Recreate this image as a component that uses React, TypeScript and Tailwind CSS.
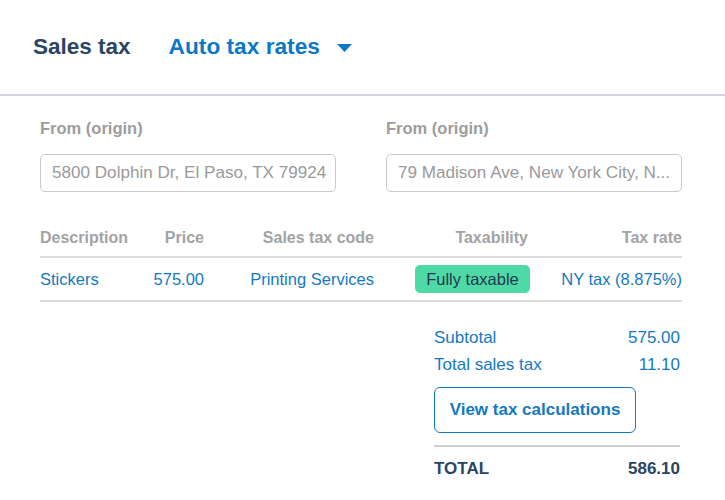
import React from "react";

const font = { fontFamily: '"Liberation Sans", Arial, Helvetica, sans-serif' };

function Caret() {
  return (
    <svg width="15" height="8" viewBox="0 0 15 8" className="ml-[17px] mt-[2px]">
      <polygon points="0,0 15,0 7.5,8" fill="#0b77c5" />
    </svg>
  );
}

function AddressField({ label, value }: { label: string; value: string }) {
  return (
    <div className="flex flex-col w-[296px]">
      <div className="h-[20px] leading-[20px] text-[16.5px] font-bold text-[#9d9d9d]">{label}</div>
      <div className="mt-[16px] h-[38px] rounded-[5px] border border-[#c9c9c9] pl-[11px] pr-[2px] flex items-center">
        <span className="text-[17.1px] text-[#9a9a9a] whitespace-nowrap">{value}</span>
      </div>
    </div>
  );
}

export default function App() {
  const cols = "grid grid-cols-[100px_64px_170px_156px_152px] items-center";
  return (
    <div className="w-[725px] h-[500px] bg-white overflow-hidden" style={font}>
      {/* Top bar */}
      <div className="h-[96px] border-b-2 border-[#d5d3dd] flex items-center pl-[33px] pb-[1px]">
        <span className="text-[22.5px] font-bold text-[#2a4562]">Sales tax</span>
        <span className="ml-[38px] text-[22.7px] font-bold text-[#0b77c5]">Auto tax rates</span>
        <Caret />
      </div>

      <div className="pl-[40px] pr-[43px]">
        {/* Origin addresses */}
        <div className="pt-[22px] flex gap-[50px]">
          <AddressField label="From (origin)" value="5800 Dolphin Dr, El Paso, TX 79924" />
          <AddressField label="From (origin)" value="79 Madison Ave, New York City, N..." />
        </div>

        {/* Line items */}
        <div className="mt-[28px]">
          <div className={`${cols} h-[38px] border-b-2 border-[#dcdcdc] text-[16px] font-bold text-[#a3a3a3]`}>
            <div>Description</div>
            <div className="text-right">Price</div>
            <div className="text-right">Sales tax code</div>
            <div className="text-right pr-[2px]">Taxability</div>
            <div className="text-right">Tax rate</div>
          </div>
          <div className={`${cols} h-[44px] border-b-2 border-[#dcdcdc] text-[16.5px] text-[#1479c1]`}>
            <div>Stickers</div>
            <div className="text-right">575.00</div>
            <div className="text-right">Printing Services</div>
            <div className="flex justify-end">
              <span className="h-[28px] w-[115px] rounded-[5px] bg-[#4fd9a6] text-[#1f3a4f] flex items-center justify-center">
                Fully taxable
              </span>
            </div>
            <div className="text-right">NY tax (8.875%)</div>
          </div>
        </div>

        {/* Totals */}
        <div className="ml-auto mr-[2px] w-[246px] mt-[22px] text-[17px]">
          <div className="h-[27px] flex items-center justify-between text-[#1479c1]">
            <span>Subtotal</span>
            <span>575.00</span>
          </div>
          <div className="h-[27px] flex items-center justify-between text-[#1479c1]">
            <span>Total sales tax</span>
            <span>11.10</span>
          </div>
          <button className="mt-[9px] h-[46px] w-[202px] rounded-[6px] border-[1.5px] border-[#1479c1] text-[17px] font-bold text-[#1479c1] flex items-center justify-center bg-white">
            View tax calculations
          </button>
          <div className="mt-[12px] border-t-2 border-[#d3d0d3]" />
          <div className="h-[44px] flex items-center justify-between font-bold text-[#2a4562]">
            <span>TOTAL</span>
            <span>586.10</span>
          </div>
        </div>
      </div>
    </div>
  );
}
